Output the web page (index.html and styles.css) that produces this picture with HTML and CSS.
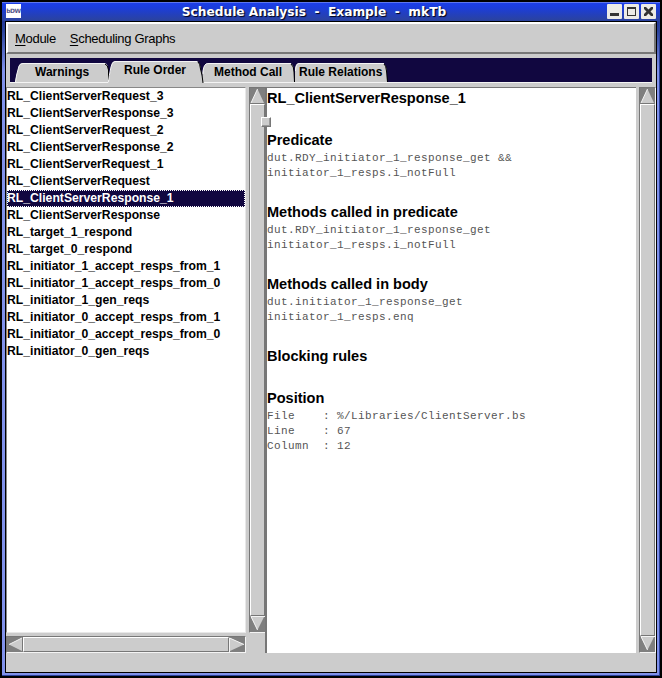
FILE: index.html
```html
<!DOCTYPE html>
<html lang="en">
<head>
<meta charset="utf-8">
<title>Schedule Analysis - Example - mkTb</title>
<link rel="stylesheet" href="styles.css">
</head>
<body>
<div class="window">
  <header class="titlebar">
    <span class="app-icon">bDW</span>
    <h1 class="title">Schedule Analysis&nbsp; -&nbsp; Example&nbsp; -&nbsp; mkTb</h1>
    <div class="controls">
      <svg class="control" viewBox="0 0 15 15"><path d="M3 9h9v3H3z"/></svg>
      <svg class="control" viewBox="0 0 15 15"><path fill-rule="evenodd" d="M3 3h9v9H3zM4 5v6h7V5z"/></svg>
      <svg class="control" viewBox="0 0 15 15"><path d="M3 3h2l2.500 2.500L10 3h2v2L9.500 7.500 12 10v2h-2L7.500 9.500 5 12H3v-2l2.500-2.500L3 5z"/></svg>
    </div>
  </header>
  <div class="frame">
  <div class="client">
    <nav class="menubar"><span><u>M</u>odule</span><span><u>S</u>cheduling Graphs</span></nav>
    <div class="tabs">
      <svg width="642" height="26" viewBox="0 0 642 26">
        <rect width="642" height="24" fill="#110740"/>
        <rect y="24" width="642" height="2" fill="#cccccc"/>
        <path class="light" d="M0 24.500H100M193 24.500H642"/>
        <path class="face" d="M5 24Q6 18 9 8Q10 5 13 5H95Q98 6 98 11L100 24z"/>
        <path class="light" d="M5.500 24Q6 18 9 8Q10 5.500 13 5.500H95"/>
        <path class="dark" d="M95 6Q98 7 98.500 12V22"/>
        <path class="face" d="M192 24Q192 8 196 6Q197 5 199 5H280Q284 6 284 14V24z"/>
        <path class="light" d="M193 16Q193 8 196 6Q197 5.500 199 5.500H281"/>
        <path class="face" d="M285 24V10Q286 5 289 5H373Q376 6 377 14V24z"/>
        <path class="light" d="M285.500 13Q286 5.500 289 5.500H374"/>
        <path class="dark" d="M281 6Q284 8 284 14L284.500 24M374 6Q376 7 376.500 13L377.500 24"/>
        <path class="face" d="M98 26Q99 20 101 9Q102 3 105 3H187Q190 4 191 12L193 24V26z"/>
        <path class="light" d="M98.500 24Q99 18 101 9Q102 3.500 105 3.500H187"/>
        <path class="dark" d="M188 4Q190 5 190.500 11L192 17L193 25"/>
      </svg>
      <span class="tab warnings">Warnings</span>
      <span class="tab order">Rule Order</span>
      <span class="tab call">Method Call</span>
      <span class="tab relations">Rule Relations</span>
    </div>
    <main class="panes">
      <section class="left">
        <div class="list-row">
          <ul class="list">
            <li>RL_ClientServerRequest_3</li>
            <li>RL_ClientServerResponse_3</li>
            <li>RL_ClientServerRequest_2</li>
            <li>RL_ClientServerResponse_2</li>
            <li>RL_ClientServerRequest_1</li>
            <li>RL_ClientServerRequest</li>
            <li class="selected">RL_ClientServerResponse_1</li>
            <li>RL_ClientServerResponse</li>
            <li>RL_target_1_respond</li>
            <li>RL_target_0_respond</li>
            <li>RL_initiator_1_accept_resps_from_1</li>
            <li>RL_initiator_1_accept_resps_from_0</li>
            <li>RL_initiator_1_gen_reqs</li>
            <li>RL_initiator_0_accept_resps_from_1</li>
            <li>RL_initiator_0_accept_resps_from_0</li>
            <li>RL_initiator_0_gen_reqs</li>
          </ul>
          <div class="vscroll">
            <svg width="15" height="16" viewBox="0 0 15 16"><path class="arrow" d="M7.500 1L14 15H1z"/><path class="light" d="M1 15L7.500 1"/><path class="shade" d="M1 15.500H14"/></svg>
            <div class="thumb"></div>
            <svg width="15" height="16" viewBox="0 0 15 16"><path class="arrow" d="M1 1H14L7.500 14z"/><path class="light" d="M7.500 14L1 .5H15"/></svg>
          </div>
        </div>
        <div class="hscroll">
          <svg width="16" height="15" viewBox="0 0 16 15"><path class="arrow" d="M2 7.500L15 1V14z"/><path class="light" d="M15 1L2 7.500"/><path class="shade" d="M15.500 1V14"/></svg>
          <div class="thumb"></div>
          <svg width="16" height="15" viewBox="0 0 16 15"><path class="arrow" d="M1 1L15 7.500L1 14z"/><path class="light" d="M.5 15V1L15 7.500"/></svg>
        </div>
      </section>
      <section class="right">
        <span class="sash"></span>
        <article class="detail">
          <h2>RL_ClientServerResponse_1</h2>
          <h2>Predicate</h2>
          <pre>dut.RDY_initiator_1_response_get &amp;&amp;
initiator_1_resps.i_notFull</pre>
          <h2>Methods called in predicate</h2>
          <pre>dut.RDY_initiator_1_response_get
initiator_1_resps.i_notFull</pre>
          <h2>Methods called in body</h2>
          <pre>dut.initiator_1_response_get
initiator_1_resps.enq</pre>
          <h2>Blocking rules</h2>
          <h2>Position</h2>
          <pre>File    : %/Libraries/ClientServer.bs
Line    : 67
Column  : 12</pre>
        </article>
        <div class="vscroll">
          <svg width="15" height="16" viewBox="0 0 15 16"><path class="arrow" d="M7.500 1L14 15H1z"/><path class="light" d="M1 15L7.500 1"/><path class="shade" d="M1 15.500H14"/></svg>
          <div class="thumb"></div>
          <svg width="15" height="16" viewBox="0 0 15 16"><path class="arrow" d="M1 1H14L7.500 14z"/><path class="light" d="M7.500 14L1 .5H15"/></svg>
        </div>
      </section>
    </main>
  </div>
  </div>
</div>
</body>
</html>
```
FILE: styles.css
```css
* { box-sizing: border-box; }
body { margin: 0; background: #000; font-family: "Liberation Sans", Arial, sans-serif; color: #000; }
svg { display: block; flex: none; }
.window { width: 662px; height: 678px; padding: 2px; background: #000; overflow: hidden; }
.titlebar {
  height: 19px; display: flex; align-items: flex-start; padding: 2px 4px 0;
  background: linear-gradient(#5d76ee 0, #5d76ee 1px, #1c3fe8 1px, #1c3ddb 30%, #2b439c 100%);
}
.app-icon {
  width: 15px; height: 14px; background: #fff; overflow: hidden; color: #55558a;
  font: bold 6px/13px "DejaVu Sans", sans-serif; text-align: center; letter-spacing: -.5px;
}
.title {
  flex: 1; margin: 0; text-align: center; white-space: nowrap; color: #fff;
  font: bold 12.200px/17px "DejaVu Sans", sans-serif; text-shadow: 1px 1px 1px #001;
}
.controls { display: flex; gap: 2px; }
.control { width: 15px; height: 15px; background: #ecebe6; fill: #333; border-radius: 1px; }
.frame {
  height: 655px; padding: 0 2px 2px 3px;
  border: solid #2b439c; border-width: 0 1px 1px 0;
  background: linear-gradient(#24389a 0, #2b439c 10px, #8091ea 50px, #8091ea 100%);
}
.client {
  height: 652px; display: flex; flex-direction: column; background: #cccccc;
  border: 1px solid #000;
}
.menubar {
  height: 32px; flex: none; display: flex; gap: 14px; padding: 7px;
  border: 2px solid; border-color: #fff #777 #777 #fff;
  font-size: 13px; line-height: 15px; letter-spacing: -.3px;
}
u { text-underline-offset: 2px; }
.tabs { position: relative; height: 33px; flex: none; padding: 4px 4px 0; }
.tab { position: absolute; top: 11px; font-weight: bold; font-size: 12px; line-height: 14px; white-space: nowrap; }
.warnings { left: 29px; }
.order { left: 118px; top: 9px; }
.call { left: 208px; }
.relations { left: 293px; }
.face { fill: #cccccc; }
.light { fill: none; stroke: #f4f4f4; }
.dark { fill: none; stroke: #000; }
.shade { fill: none; stroke: #777; }
.arrow { fill: #cccccc; }
.panes { height: 566px; display: flex; }
.left { width: 259px; display: flex; flex-direction: column; gap: 3px; }
.list-row { flex: 1; display: flex; gap: 3px; }
.list {
  flex: 1; margin: 0; padding: 0; background: #fff; list-style: none;
  border: 1px solid; border-color: #888 #e8e8e8 #e8e8e8 #888;
}
.list li { height: 17px; font-weight: bold; font-size: 12.200px; line-height: 16px; white-space: nowrap; }
.list .selected { background: #110740; color: #fff; outline: 1px dotted #fff; outline-offset: -1px; }
.vscroll {
  width: 16px; display: flex; flex-direction: column; background: #7f7f7f;
  border: solid #777; border-width: 1px 0 0 1px; border-bottom: 1px solid #f4f4f4;
}
.thumb { flex: 1; background: #cccccc; border: 1px solid; border-color: #fff #777 #777 #fff; }
.hscroll {
  width: 240px; height: 17px; display: flex; background: #7f7f7f;
  border: 1px solid; border-color: #777 #f4f4f4 #f4f4f4 #777;
}
.right { position: relative; flex: 1; display: flex; gap: 3px; }
.right .vscroll { width: 17px; border-right: 1px solid #f4f4f4; }
.sash {
  position: absolute; left: -4px; top: 30px; width: 10px; height: 10px; background: #cccccc;
  border: 1px solid; border-color: #fff #777 #777 #fff; box-shadow: inset -1px -1px #999;
}
.detail { flex: 1; background: #fff; border: solid #777; border-width: 1px 0 0 2px; }
h2 { margin: 22px 0 0; font-size: 14.550px; line-height: 20px; }
h2:first-child { margin-top: 0; }
pre { margin: 0; position: relative; top: 1px; font: 11px/15px "Liberation Mono", monospace; letter-spacing: .4px; color: #555; }
```
